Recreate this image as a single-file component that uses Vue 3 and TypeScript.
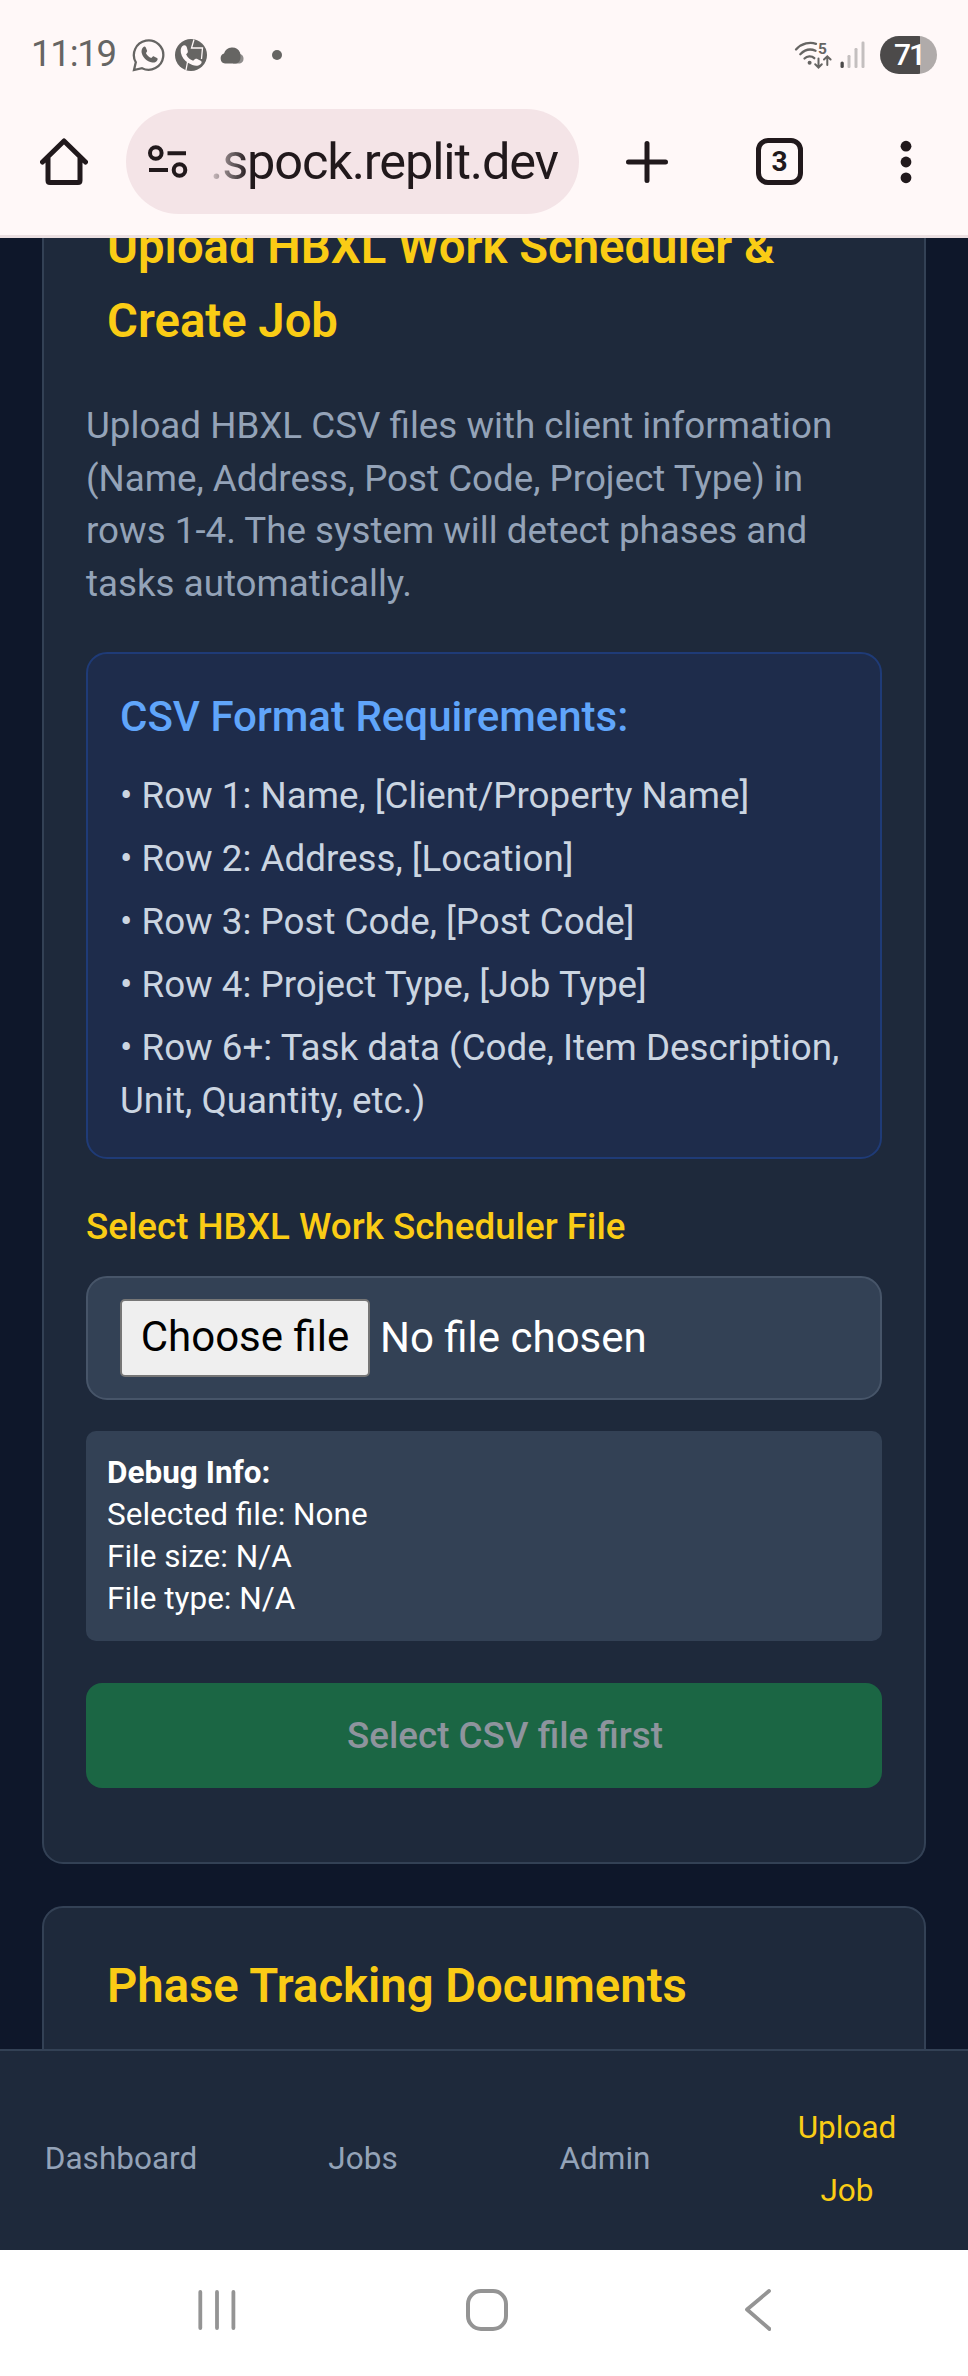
<script setup lang="ts">
interface NavItem {
  label: string
  active?: boolean
}

const requirements: string[] = [
  'Row 1: Name, [Client/Property Name]',
  'Row 2: Address, [Location]',
  'Row 3: Post Code, [Post Code]',
  'Row 4: Project Type, [Job Type]',
  'Row 6+: Task data (Code, Item Description, Unit, Quantity, etc.)',
]

const debugLines: string[] = ['Selected file: None', 'File size: N/A', 'File type: N/A']

const navItems: NavItem[] = [
  { label: 'Dashboard' },
  { label: 'Jobs' },
  { label: 'Admin' },
  { label: 'Upload Job', active: true },
]
</script>

<template>
  <div class="screen">
    <header class="chrome">
      <div class="status">
        <span class="clock">11:19</span>
        <svg class="whatsapp" width="34" height="34" viewBox="0 0 34 34">
          <path d="M2 32 L3.8 24.3 A14.7 14.7 0 1 1 10 30.2 Z" fill="none" stroke="#666563" stroke-width="2.3" stroke-linejoin="miter" />
          <path d="M11.2 9.2c1-1 2.100-.8 2.600.4l1.200 2.900c.3.800 0 1.300-1.100 2.600 1.200 2.500 2.900 4.100 5.400 5 1.500-1.900 1.900-2.100 2.700-1.700l3 1.500c.9.500.8 1.200.3 2.300-.9 1.900-3 2.700-5.100 2.300-5.400-1-9.700-5.100-10.600-10-.3-2.100.3-4.100 1.600-5.300z" fill="#666563" />
        </svg>
        <svg class="call" width="32" height="32" viewBox="0 0 32 32">
          <circle cx="16" cy="16" r="16" fill="#666563" />
          <path d="M7 7.500c2-2 4.200-1.300 4.800.8l1 3.700c.2 1.300-.3 2-1.700 3.300 1.700 3.600 4 5.500 7.100 6.500 2.100-2.200 3-2.400 4.500-1.600l3 1.500c1.500 1 1.200 2.500-.5 3.800-3 2.200-7.500 1.200-11.800-1.400-4.200-2.600-6.700-6.400-7.500-10.300-.4-2.800-.1-5 1.100-6.300z" fill="#fff8f8" />
          <path d="M19 0.500 16.500 9H27.500L26.500 20M11 31 12.500 23" fill="none" stroke="#fff8f8" stroke-width="1.300" />
        </svg>
        <svg class="cloud" width="27" height="18" viewBox="0 0 27 18">
          <path d="M17 6a6 6 0 0 1 4.200 2A5 5 0 0 1 21 17.500H14z" fill="#8f8d8c" />
          <path d="M6 17.500A5.200 5.200 0 0 1 5 7.500 8.600 8.600 0 0 1 21 6.500C22.500 12 21 17.500 16.500 17.500z" fill="#666563" />
        </svg>
        <span class="dot"></span>
        <svg class="wifi" width="39" height="30" viewBox="0 0 39 30">
          <g fill="none" stroke="#666563" stroke-width="2.300" stroke-linecap="round">
            <path d="M2 9.500C8 3 16 1.800 22 3.800M6.300 14.200C11 9.500 16.500 8.500 21.500 10.800M10.500 18.500C13 16 17.500 15.500 20.300 18.200" />
            <path d="M24.500 18.500v8.700M21.200 24.300l3.300 3.200 3.300-3.200M33.300 25v-8.500M30 19.500l3.300-3.200 3.300 3.200" stroke-width="2" />
          </g>
          <circle cx="15.600" cy="22.700" r="2" fill="#666563" />
          <text x="24" y="13.800" class="wifi-gen">5</text>
        </svg>
        <svg class="signal" width="26" height="28" viewBox="0 0 26 28">
          <rect x="0.500" y="20.500" width="3.300" height="6.500" rx="1.600" fill="#4c4a4a" />
          <rect x="7.500" y="14" width="3" height="13" rx="1.200" fill="#c4bfbf" />
          <rect x="14.500" y="7" width="3" height="20" rx="1.200" fill="#c4bfbf" />
          <rect x="21.500" y="0.500" width="3" height="26.500" rx="1.200" fill="#c4bfbf" />
        </svg>
        <span class="battery">71</span>
      </div>

      <div class="toolbar">
        <svg class="home" width="48" height="48" viewBox="0 0 48 48">
          <path d="M2.500 24 24 3 45.500 24M8 20V42.500Q8 44.500 10 44.500H38Q40 44.500 40 42.500V20" fill="none" stroke="#21191c" stroke-width="5" stroke-linecap="round" stroke-linejoin="round" />
        </svg>
        <div class="address">
          <svg width="40" height="34" viewBox="0 0 40 34" class="tune">
            <g fill="none" stroke="#21191c" stroke-width="4">
              <circle cx="7.800" cy="8" r="5.800" />
              <circle cx="31.500" cy="25" r="5.800" />
              <path d="M19.500 8.300H38M1 25H20" />
            </g>
          </svg>
          <span class="url">.spock.replit.dev</span>
        </div>
        <svg class="plus" width="42" height="42" viewBox="0 0 42 42">
          <path d="M21 2.500V39.500M2.500 21H39.500" stroke="#21191c" stroke-width="5" stroke-linecap="round" />
        </svg>
        <span class="tabs">3</span>
        <svg class="more" width="12" height="44" viewBox="0 0 12 44">
          <circle cx="6" cy="6.200" r="5.400" fill="#21191c" />
          <circle cx="6" cy="22" r="5.400" fill="#21191c" />
          <circle cx="6" cy="37.800" r="5.400" fill="#21191c" />
        </svg>
      </div>
    </header>

    <main class="page">
      <section class="card upload">
        <h2 class="title">Upload HBXL Work Scheduler &amp; Create Job</h2>
        <p class="intro">
          Upload HBXL CSV files with client information (Name, Address, Post Code, Project Type) in
          rows 1-4. The system will detect phases and tasks automatically.
        </p>

        <div class="format">
          <h3>CSV Format Requirements:</h3>
          <p v-for="row in requirements" :key="row">• {{ row }}</p>
        </div>

        <label class="label">Select HBXL Work Scheduler File</label>
        <div class="picker">
          <button type="button" class="choose">Choose file</button>
          <span class="chosen">No file chosen</span>
        </div>

        <div class="debug">
          <strong>Debug Info:</strong>
          <span v-for="line in debugLines" :key="line">{{ line }}</span>
        </div>

        <button type="button" class="submit" disabled><span>Select CSV file first</span></button>
      </section>

      <section class="card">
        <h2 class="title">Phase Tracking Documents</h2>
      </section>
    </main>

    <nav class="tabbar">
      <a v-for="item in navItems" :key="item.label" :class="{ active: item.active }">
        <span>{{ item.label }}</span>
      </a>
    </nav>

    <footer class="system">
      <svg class="recents" width="40" height="42" viewBox="0 0 40 42">
        <path d="M3.300 3V39M20 3V39M36.400 3V39" stroke="#949494" stroke-width="3.800" stroke-linecap="round" />
      </svg>
      <svg class="homekey" width="44" height="44" viewBox="0 0 44 44">
        <rect x="3" y="3" width="38" height="38" rx="13" fill="none" stroke="#949494" stroke-width="4" />
      </svg>
      <svg class="back" width="28" height="42" viewBox="0 0 28 42">
        <path d="M26 2 4 20.500 26.500 40" fill="none" stroke="#949494" stroke-width="3.800" stroke-linecap="round" stroke-linejoin="round" />
      </svg>
    </footer>
  </div>
</template>

<style>
body {
  background: #0f172a;
}
</style>

<style scoped>
* {
  box-sizing: border-box;
  margin: 0;
}

.screen {
  display: flex;
  flex-direction: column;
  width: 968px;
  height: 2376px;
  overflow: hidden;
  background: #0e172a;
  font-family: Roboto, 'Liberation Sans', sans-serif;
}

.chrome {
  flex: none;
  height: 238px;
  background: #fff8f8;
  border-bottom: 3px solid #ebdfe1;
}

.status {
  display: flex;
  align-items: center;
  height: 109px;
  padding: 1px 31px 0 31px;
}

.clock {
  width: 101px;
  padding-bottom: 3px;
  font: 400 36.500px/42px Roboto, sans-serif;
  letter-spacing: -1.200px;
  white-space: nowrap;
  color: #666563;
}

.call {
  margin-left: 9px;
}

.cloud {
  margin-left: 12px;
}

.dot {
  width: 10px;
  height: 10px;
  margin-left: 26px;
  border-radius: 50%;
  background: #666563;
}

.wifi {
  margin-left: auto;
  overflow: visible;
}

.wifi-gen {
  font: 700 15.500px Roboto, sans-serif;
  fill: #666563;
}

.signal {
  margin-left: 7px;
}

.battery {
  width: 57px;
  height: 38px;
  margin-left: 14px;
  padding-left: 1px;
  border-radius: 19px;
  background: linear-gradient(90deg, #4c4a4a 40px, #b0abaa 40px);
  font: 500 30px/37px Roboto, sans-serif;
  letter-spacing: -2px;
  text-align: center;
  color: #fff;
}

.toolbar {
  display: flex;
  align-items: center;
  height: 105px;
  padding-left: 40px;
}

.address {
  display: flex;
  align-items: center;
  width: 453px;
  height: 105px;
  margin-left: 38px;
  padding-left: 22px;
  border-radius: 53px;
  background: #f4e4e7;
}

.url {
  margin-left: 22px;
  font: 400 50.500px/64px Roboto, sans-serif;
  letter-spacing: -1.150px;
  color: #21191c;
  -webkit-mask-image: linear-gradient(90deg, rgba(0, 0, 0, 0.15), #000 38px);
  mask-image: linear-gradient(90deg, rgba(0, 0, 0, 0.15), #000 38px);
}

.plus {
  margin-left: 47px;
}

.tabs {
  width: 47px;
  height: 47px;
  margin-left: 88px;
  border: 5px solid #21191c;
  border-radius: 12px;
  font: 700 28px/37px Roboto, sans-serif;
  text-align: center;
  color: #21191c;
}

.more {
  margin-left: 97px;
}

.page {
  flex: none;
  height: 1811px;
  padding: 0 42px;
  overflow: hidden;
}

.card {
  padding: 41px 42px 74px;
  border: 2px solid #334155;
  border-radius: 21px;
  background: #1e293b;
}

.upload {
  height: 1697px;
  margin: -71px 0 42px;
}

.title {
  padding: 0 21px;
  font-size: 47.250px;
  font-weight: 600;
  line-height: 74px;
  color: #facc15;
}

.intro {
  margin-top: 42px;
  font-size: 36.750px;
  line-height: 52.600px;
  color: #94a3b8;
}

.format {
  margin-top: 42px;
  padding: 31px 32px 30px;
  border: 2px solid #1f3b77;
  border-radius: 21px;
  background: #1e2c4b;
}

.format h3 {
  font-size: 42px;
  font-weight: 500;
  line-height: 63px;
  margin-bottom: 22px;
  color: #60a5fa;
}

.format p {
  font-size: 36.750px;
  line-height: 52.500px;
  color: #cbd5e1;
}

.format p + p {
  margin-top: 10.500px;
}

.label {
  display: block;
  margin: 42px 0 22px;
  font-size: 36.750px;
  font-weight: 500;
  line-height: 52.600px;
  color: #facc15;
}

.picker {
  display: flex;
  align-items: center;
  height: 124px;
  padding-left: 32px;
  border: 2px solid #475569;
  border-radius: 21px;
  background: #334155;
}

.choose {
  width: 250px;
  height: 78px;
  padding: 0 0 2px;
  border: 2px solid #767676;
  border-radius: 5px;
  background: #efefef;
  font: 400 42px/70px Roboto, sans-serif;
  color: #000;
}

.chosen {
  margin-left: 10px;
  font-size: 42px;
  color: #fff;
}

.debug {
  display: flex;
  flex-direction: column;
  height: 210px;
  margin-top: 31px;
  padding: 21px 21px;
  border-radius: 10px;
  background: #334155;
  font-size: 31.500px;
  line-height: 42px;
  color: #fff;
}

.submit {
  display: block;
  width: 100%;
  height: 105px;
  margin-top: 42px;
  padding: 1px 0 0 42px;
  border: 0;
  border-radius: 16px;
  background: #1b6644;
  font: 500 36.750px/52.600px Roboto, sans-serif;
  color: #8e949d;
}

.tabbar {
  display: grid;
  flex: none;
  grid-template-columns: repeat(4, 242px);
  align-items: center;
  height: 201px;
  padding-top: 16px;
  border-top: 2px solid #334155;
  background: #1e293b;
  font-size: 31.500px;
  line-height: 63px;
  text-align: center;
  color: #94a3b8;
}

.tabbar a {
  padding: 0 42px;
}

.tabbar a.active {
  padding: 0 60px;
  color: #facc15;
}

.system {
  display: flex;
  flex: none;
  align-items: center;
  height: 126px;
  padding: 0 0 6px 197px;
  background: #fff;
}

.homekey {
  margin-left: 228px;
}

.back {
  margin-left: 234px;
}
</style>
